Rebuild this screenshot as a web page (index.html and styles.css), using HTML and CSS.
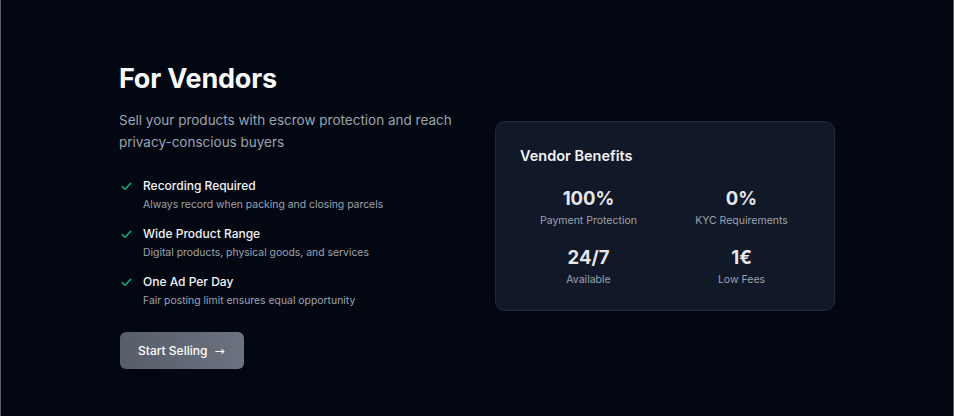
FILE: index.html
```html
<!DOCTYPE html>
<html>
	<head>
		<meta charset="utf-8">
		<link rel="stylesheet" href="styles.css">
	</head>
	<body>
		<section class="vendors">
			<div class="vendors-inner">
				<div class="vendors-info">
					<h1>For Vendors</h1>
					<p class="lead">Sell your products with escrow protection and reach privacy-conscious buyers</p>

					<ul class="features">
						<li>
							<svg class="check" viewBox="0 0 24 24"><path d="M20 6 9 17l-5-5"/></svg>
							<div>
								<h3>Recording Required</h3>
								<p>Always record when packing and closing parcels</p>
							</div>
						</li>
						<li>
							<svg class="check" viewBox="0 0 24 24"><path d="M20 6 9 17l-5-5"/></svg>
							<div>
								<h3>Wide Product Range</h3>
								<p>Digital products, physical goods, and services</p>
							</div>
						</li>
						<li>
							<svg class="check" viewBox="0 0 24 24"><path d="M20 6 9 17l-5-5"/></svg>
							<div>
								<h3>One Ad Per Day</h3>
								<p>Fair posting limit ensures equal opportunity</p>
							</div>
						</li>
					</ul>

					<button class="sell-button">Start Selling <span class="arrow">→</span></button>
				</div>

				<div class="benefits">
					<h2>Vendor Benefits</h2>
					<div class="stats">
						<div class="stat">
							<div class="stat-value">100%</div>
							<div class="stat-label">Payment Protection</div>
						</div>
						<div class="stat">
							<div class="stat-value">0%</div>
							<div class="stat-label">KYC Requirements</div>
						</div>
						<div class="stat">
							<div class="stat-value">24/7</div>
							<div class="stat-label">Available</div>
						</div>
						<div class="stat">
							<div class="stat-value">1€</div>
							<div class="stat-label">Low Fees</div>
						</div>
					</div>
				</div>
			</div>
		</section>
	</body>
</html>
```

FILE: styles.css
```css
* {
	box-sizing: border-box;
}
html, body {
	height: 100%;
}
body {
	margin: 0;
	background-color: #030712;
	color: #f3f4f6;
	font-family: Inter, "Noto Sans", sans-serif;
	border-left: solid 1px #5b5f66;
	border-right: solid 1px #5b5f66;
}

.vendors {
	padding: 62px 0 0 0;
}
.vendors-inner {
	width: 716px;
	margin: 0 auto;
	display: grid;
	grid-template-columns: 1fr 1fr;
	gap: 36px;
	align-items: center;
}

h1 {
	font-size: 27px;
	line-height: 34px;
	font-weight: 700;
	margin: 0 0 14px 0;
	color: #f9fafb;
	letter-spacing: -.2px;
}
.lead {
	font-size: 13.5px;
	line-height: 21.5px;
	color: #9ca3af;
	margin: 0 0 23px 0;
}

.features {
	list-style: none;
	margin: 0;
	padding: 0;
	display: flex;
	flex-direction: column;
	gap: 11px;
}
.features li {
	display: flex;
	align-items: flex-start;
	gap: 10px;
}
.check {
	width: 13px;
	height: 13px;
	margin: 4px 0 0 1px;
	flex-shrink: 0;
	fill: none;
	stroke: #10b981;
	stroke-width: 2.5;
	stroke-linecap: round;
	stroke-linejoin: round;
}
.features h3 {
	font-size: 12px;
	line-height: 20px;
	font-weight: 500;
	margin: 0;
	color: #f3f4f6;
}
.features p {
	font-size: 10.4px;
	line-height: 16px;
	margin: 1px 0 0 0;
	color: #9ca3af;
}

.sell-button {
	margin: 23px 0 0 1px;
	height: 37px;
	padding: 0 19px 0 18px;
	border: none;
	border-radius: 6px;
	background: linear-gradient(90deg, #565e6a, #6b7280);
	color: #fff;
	font-family: inherit;
	font-size: 12px;
	font-weight: 500;
}
.sell-button .arrow {
	font-family: "DejaVu Sans", sans-serif;
	font-weight: 400;
	margin-left: 4px;
}

.benefits {
	background-color: #111827;
	border: solid 1px #1f2937;
	border-radius: 10px;
	padding: 23px 24px 22px 24px;
}
.benefits h2 {
	font-size: 14.5px;
	line-height: 22px;
	font-weight: 600;
	margin: 0 0 18px 0;
	color: #f3f4f6;
}
.stats {
	display: grid;
	grid-template-columns: 1fr 1fr;
	column-gap: 16px;
	row-gap: 15px;
	text-align: center;
}
.stat-value {
	font-size: 18.5px;
	line-height: 26px;
	font-weight: 700;
	color: #e5e7eb;
}
.stat-label {
	font-size: 10.5px;
	line-height: 16px;
	margin-top: 2px;
	color: #9ca3af;
}
```
